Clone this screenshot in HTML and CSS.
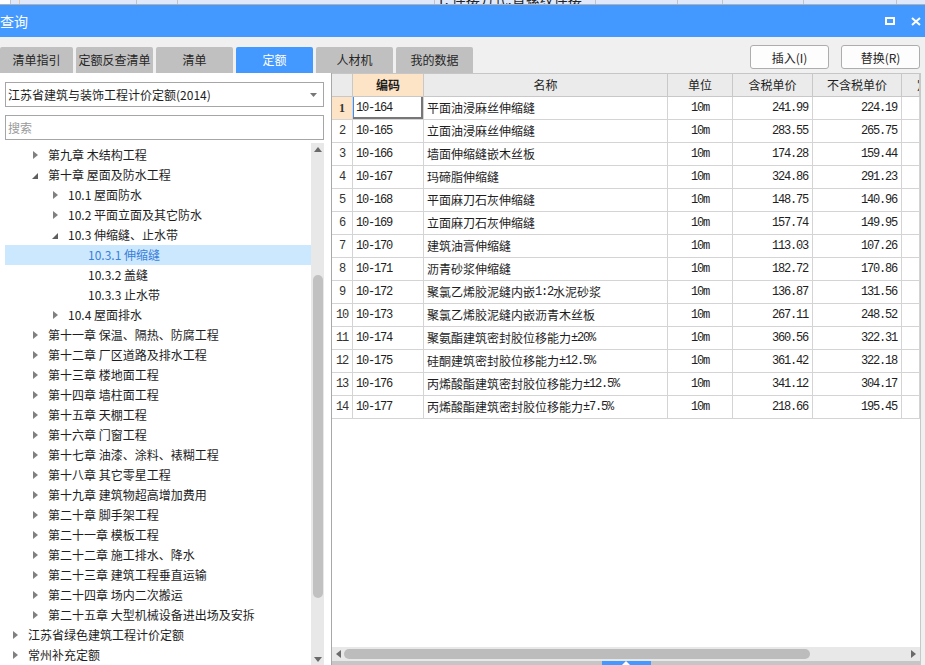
FILE: index.html
```html
<!DOCTYPE html>
<html lang="zh-CN">
<head>
<meta charset="utf-8">
<title>查询</title>
<link rel="stylesheet" href="styles.css">
</head>
<body>
<div class="bg-strip">
  <div class="bs bs-white"></div>
  <div class="bs"></div>
  <div class="bs bs-peach"></div>
  <div class="bs"></div>
  <div class="bs"></div>
  <div class="bs bs-text"><span>1. 连接方式:直螺纹连接</span></div>
  <div class="bs"></div>
  <div class="bs"></div>
  <div class="bs"></div>
  <div class="bs"></div>
  <div class="bs"></div>
</div>

<div class="titlebar">
  <span class="title">查询</span>
  <div class="win-icons">
    <svg class="ico-max" width="10" height="8" viewBox="0 0 10 8"><rect x="1" y="1" width="8" height="6" fill="none" stroke="#fff" stroke-width="2"/></svg>
    <svg class="ico-close" width="10" height="9" viewBox="0 0 10 9"><path d="M1 1 L9 8 M9 1 L1 8" stroke="#fff" stroke-width="2" fill="none"/></svg>
  </div>
</div>

<div class="toolbar">
  <div class="tabs">
    <div class="tab tab-first">清单指引</div>
    <div class="tab">定额反查清单</div>
    <div class="tab">清单</div>
    <div class="tab active">定额</div>
    <div class="tab">人材机</div>
    <div class="tab">我的数据</div>
  </div>
  <div class="actions">
    <button class="btn">插入(I)</button>
    <button class="btn">替换(R)</button>
  </div>
</div>

<div class="main">
  <div class="left">
    <div class="select">
      <span>江苏省建筑与装饰工程计价定额(2014)</span>
      <svg width="7" height="4" viewBox="0 0 7 4"><path d="M0 0 L7 0 L3.5 4Z" fill="#777"/></svg>
    </div>
    <div class="search">搜索</div>
    <div class="tree">
      <div class="rows">
        <div class="row l1"><span class="tw c"><svg width="5" height="8" viewBox="0 0 5 8"><path d="M0 0 L5 4 L0 8Z"/></svg></span>第九章 木结构工程</div>
        <div class="row l1"><span class="tw e"><svg width="6" height="6" viewBox="0 0 6 6"><path d="M6 0 L6 6 L0 6Z"/></svg></span>第十章 屋面及防水工程</div>
        <div class="row l2"><span class="tw c"><svg width="5" height="8" viewBox="0 0 5 8"><path d="M0 0 L5 4 L0 8Z"/></svg></span>10.1 屋面防水</div>
        <div class="row l2"><span class="tw c"><svg width="5" height="8" viewBox="0 0 5 8"><path d="M0 0 L5 4 L0 8Z"/></svg></span>10.2 平面立面及其它防水</div>
        <div class="row l2"><span class="tw e"><svg width="6" height="6" viewBox="0 0 6 6"><path d="M6 0 L6 6 L0 6Z"/></svg></span>10.3 伸缩缝、止水带</div>
        <div class="row l3 sel"><span class="tw"></span>10.3.1 伸缩缝</div>
        <div class="row l3"><span class="tw"></span>10.3.2 盖缝</div>
        <div class="row l3"><span class="tw"></span>10.3.3 止水带</div>
        <div class="row l2"><span class="tw c"><svg width="5" height="8" viewBox="0 0 5 8"><path d="M0 0 L5 4 L0 8Z"/></svg></span>10.4 屋面排水</div>
        <div class="row l1"><span class="tw c"><svg width="5" height="8" viewBox="0 0 5 8"><path d="M0 0 L5 4 L0 8Z"/></svg></span>第十一章 保温、隔热、防腐工程</div>
        <div class="row l1"><span class="tw c"><svg width="5" height="8" viewBox="0 0 5 8"><path d="M0 0 L5 4 L0 8Z"/></svg></span>第十二章 厂区道路及排水工程</div>
        <div class="row l1"><span class="tw c"><svg width="5" height="8" viewBox="0 0 5 8"><path d="M0 0 L5 4 L0 8Z"/></svg></span>第十三章 楼地面工程</div>
        <div class="row l1"><span class="tw c"><svg width="5" height="8" viewBox="0 0 5 8"><path d="M0 0 L5 4 L0 8Z"/></svg></span>第十四章 墙柱面工程</div>
        <div class="row l1"><span class="tw c"><svg width="5" height="8" viewBox="0 0 5 8"><path d="M0 0 L5 4 L0 8Z"/></svg></span>第十五章 天棚工程</div>
        <div class="row l1"><span class="tw c"><svg width="5" height="8" viewBox="0 0 5 8"><path d="M0 0 L5 4 L0 8Z"/></svg></span>第十六章 门窗工程</div>
        <div class="row l1"><span class="tw c"><svg width="5" height="8" viewBox="0 0 5 8"><path d="M0 0 L5 4 L0 8Z"/></svg></span>第十七章 油漆、涂料、裱糊工程</div>
        <div class="row l1"><span class="tw c"><svg width="5" height="8" viewBox="0 0 5 8"><path d="M0 0 L5 4 L0 8Z"/></svg></span>第十八章 其它零星工程</div>
        <div class="row l1"><span class="tw c"><svg width="5" height="8" viewBox="0 0 5 8"><path d="M0 0 L5 4 L0 8Z"/></svg></span>第十九章 建筑物超高增加费用</div>
        <div class="row l1"><span class="tw c"><svg width="5" height="8" viewBox="0 0 5 8"><path d="M0 0 L5 4 L0 8Z"/></svg></span>第二十章 脚手架工程</div>
        <div class="row l1"><span class="tw c"><svg width="5" height="8" viewBox="0 0 5 8"><path d="M0 0 L5 4 L0 8Z"/></svg></span>第二十一章 模板工程</div>
        <div class="row l1"><span class="tw c"><svg width="5" height="8" viewBox="0 0 5 8"><path d="M0 0 L5 4 L0 8Z"/></svg></span>第二十二章 施工排水、降水</div>
        <div class="row l1"><span class="tw c"><svg width="5" height="8" viewBox="0 0 5 8"><path d="M0 0 L5 4 L0 8Z"/></svg></span>第二十三章 建筑工程垂直运输</div>
        <div class="row l1"><span class="tw c"><svg width="5" height="8" viewBox="0 0 5 8"><path d="M0 0 L5 4 L0 8Z"/></svg></span>第二十四章 场内二次搬运</div>
        <div class="row l1"><span class="tw c"><svg width="5" height="8" viewBox="0 0 5 8"><path d="M0 0 L5 4 L0 8Z"/></svg></span>第二十五章 大型机械设备进出场及安拆</div>
        <div class="row l0"><span class="tw c"><svg width="5" height="8" viewBox="0 0 5 8"><path d="M0 0 L5 4 L0 8Z"/></svg></span>江苏省绿色建筑工程计价定额</div>
        <div class="row l0"><span class="tw c"><svg width="5" height="8" viewBox="0 0 5 8"><path d="M0 0 L5 4 L0 8Z"/></svg></span>常州补充定额</div>
      </div>
      <div class="vscroll">
        <div class="vs-arrow"><svg width="8" height="5" viewBox="0 0 8 5"><path d="M0 5 L4 0 L8 5Z" fill="#6a6a6a"/></svg></div>
        <div class="vs-thumb"></div>
        <div class="vs-fill"></div>
        <div class="vs-arrow"><svg width="8" height="5" viewBox="0 0 8 5"><path d="M0 0 L8 0 L4 5Z" fill="#6a6a6a"/></svg></div>
      </div>
    </div>
  </div>

  <div class="right">
    <div class="grid-area">
      <div class="grid">
        <div class="h rn"></div>
        <div class="h hcode">编码</div>
        <div class="h">名称</div>
        <div class="h">单位</div>
        <div class="h">含税单价</div>
        <div class="h">不含税单价</div>
        <div class="h hx">定额</div>

        <div class="rn cur">1</div><div class="code focus">10-164</div><div class="name">平面油浸麻丝伸缩缝</div><div class="unit">10m</div><div class="num">241.99</div><div class="num">224.19</div><div class="x"></div>
        <div class="rn">2</div><div class="code">10-165</div><div class="name">立面油浸麻丝伸缩缝</div><div class="unit">10m</div><div class="num">283.55</div><div class="num">265.75</div><div class="x"></div>
        <div class="rn">3</div><div class="code">10-166</div><div class="name">墙面伸缩缝嵌木丝板</div><div class="unit">10m</div><div class="num">174.28</div><div class="num">159.44</div><div class="x"></div>
        <div class="rn">4</div><div class="code">10-167</div><div class="name">玛碲脂伸缩缝</div><div class="unit">10m</div><div class="num">324.86</div><div class="num">291.23</div><div class="x"></div>
        <div class="rn">5</div><div class="code">10-168</div><div class="name">平面麻刀石灰伸缩缝</div><div class="unit">10m</div><div class="num">148.75</div><div class="num">140.96</div><div class="x"></div>
        <div class="rn">6</div><div class="code">10-169</div><div class="name">立面麻刀石灰伸缩缝</div><div class="unit">10m</div><div class="num">157.74</div><div class="num">149.95</div><div class="x"></div>
        <div class="rn">7</div><div class="code">10-170</div><div class="name">建筑油膏伸缩缝</div><div class="unit">10m</div><div class="num">113.03</div><div class="num">107.26</div><div class="x"></div>
        <div class="rn">8</div><div class="code">10-171</div><div class="name">沥青砂浆伸缩缝</div><div class="unit">10m</div><div class="num">182.72</div><div class="num">170.86</div><div class="x"></div>
        <div class="rn">9</div><div class="code">10-172</div><div class="name">聚氯乙烯胶泥缝内嵌<span class="half">1:2</span>水泥砂浆</div><div class="unit">10m</div><div class="num">136.87</div><div class="num">131.56</div><div class="x"></div>
        <div class="rn">10</div><div class="code">10-173</div><div class="name">聚氯乙烯胶泥缝内嵌沥青木丝板</div><div class="unit">10m</div><div class="num">267.11</div><div class="num">248.52</div><div class="x"></div>
        <div class="rn">11</div><div class="code">10-174</div><div class="name">聚氨酯建筑密封胶位移能力<span class="half">±20%</span></div><div class="unit">10m</div><div class="num">360.56</div><div class="num">322.31</div><div class="x"></div>
        <div class="rn">12</div><div class="code">10-175</div><div class="name">硅酮建筑密封胶位移能力<span class="half">±12.5%</span></div><div class="unit">10m</div><div class="num">361.42</div><div class="num">322.18</div><div class="x"></div>
        <div class="rn">13</div><div class="code">10-176</div><div class="name">丙烯酸酯建筑密封胶位移能力<span class="half">±12.5%</span></div><div class="unit">10m</div><div class="num">341.12</div><div class="num">304.17</div><div class="x"></div>
        <div class="rn">14</div><div class="code">10-177</div><div class="name">丙烯酸酯建筑密封胶位移能力<span class="half">±7.5%</span></div><div class="unit">10m</div><div class="num">218.66</div><div class="num">195.45</div><div class="x"></div>
      </div>
      <div class="hscroll">
        <svg width="5" height="8" viewBox="0 0 5 8"><path d="M5 0 L0 4 L5 8Z" fill="#6a6a6a"/></svg>
        <div class="hs-thumb"></div>
        <div class="hs-fill"></div>
        <svg width="5" height="8" viewBox="0 0 5 8"><path d="M0 0 L5 4 L0 8Z" fill="#6a6a6a"/></svg>
      </div>
      <div class="bottom-strip">
        <div class="pull-tab"><svg width="8" height="4" viewBox="0 0 8 4"><path d="M0 4 L4 0 L8 4Z" fill="#fff"/></svg></div>
      </div>
    </div>
    <div class="edge"></div>
  </div>
</div>
</body>
</html>
```
FILE: styles.css
```css
* { box-sizing: border-box; margin: 0; padding: 0; }
html, body { width: 925px; height: 665px; overflow: hidden; }
body {
  background: #f0f0f0;
  font-family: "Noto Sans CJK SC", "Microsoft YaHei", sans-serif;
  font-size: 12px;
  color: #1e1e1e;
  display: flex;
  flex-direction: column;
}

/* background window strip */
.bg-strip {
  height: 5px;
  flex: none;
  display: grid;
  grid-template-columns: 10px 9px 117px 41px 257px 161px 82px 45px 81px 93px 1fr;
  background: #dfe9fb;
  border-bottom: 1px solid #b0b0b0;
  overflow: hidden;
}
.bs { border-left: 1px solid #c4c4c4; display: flex; align-items: flex-end; overflow: hidden; }
.bs-white { background: #fff; border-left: none; }
.bs-peach { border-left-color: #e8c9a0; }
.bs-text span { font-size: 14px; line-height: 10px; padding-left: 2px; white-space: nowrap; color: #222; }

/* title bar */
.titlebar {
  height: 32px;
  flex: none;
  background: #4399ff;
  display: flex;
  align-items: center;
  justify-content: space-between;
  color: #fff;
}
.title { font-size: 14px; line-height: 16px; }
.win-icons { display: flex; align-items: center; gap: 16px; padding-right: 4px; }
.win-icons svg { display: block; }

/* toolbar */
.toolbar {
  height: 36px;
  flex: none;
  display: flex;
  justify-content: space-between;
}
.tabs { display: flex; gap: 3px; align-self: flex-end; }
.tab {
  width: 77px;
  height: 26px;
  line-height: 26px;
  text-align: center;
  background: #c0c0c0;
  border-radius: 2px 2px 0 0;
  color: #262626;
  white-space: nowrap;
}
.tab-first { width: 73px; }
.tab.active { background: #4399ff; color: #fff; }
.actions { display: flex; gap: 12px; padding: 8px 5px 0 0; align-items: flex-start; }
.btn {
  width: 79px;
  height: 24px;
  border: 1px solid #adadad;
  border-radius: 3px;
  background: #fdfdfd;
  font-family: inherit;
  font-size: 12px;
  color: #262626;
}

/* main area */
.main { flex: 1; display: flex; min-height: 0; }

.left {
  width: 331px;
  flex: none;
  background: #fff;
  display: flex;
  flex-direction: column;
  padding: 9px 7px 0 5px;
}
.select {
  height: 25px;
  border: 1px solid #a6a6a6;
  display: flex;
  align-items: center;
  justify-content: space-between;
  padding: 0 6px 0 2px;
  color: #1e1e1e;
}
.select svg { display: block; }
.search {
  margin-top: 8px;
  height: 25px;
  border: 1px solid #a6a6a6;
  line-height: 23px;
  padding-left: 2px;
  color: #9a9a9a;
}
.tree { margin-top: 3px; flex: 1; display: flex; min-height: 0; }
.rows { flex: 1; padding-top: 2px; overflow: hidden; }
.row {
  height: 20px;
  line-height: 20px;
  display: flex;
  align-items: center;
  white-space: nowrap;
  color: #1e1e1e;
}
.row.sel { background: #cce8ff; color: #3a7fd8; }
.l0 { padding-left: 8px; }
.l1 { padding-left: 28px; }
.l2 { padding-left: 48px; }
.l3 { padding-left: 68px; }
.tw { width: 15px; flex: none; display: flex; align-items: center; }
.tw svg { display: block; }
.tw.c svg { fill: #808080; }
.tw.e svg { fill: #5e5e5e; margin-left: -1px; margin-top: 2px; }

.vscroll {
  width: 13px;
  flex: none;
  background: #e8e8e8;
  display: flex;
  flex-direction: column;
  align-items: center;
}
.vs-arrow { height: 12px; display: flex; align-items: center; justify-content: center; flex: none; }
.vs-arrow svg { display: block; }
.vs-thumb {
  margin-top: 120px;
  width: 10px;
  height: 323px;
  border-radius: 5px;
  background: #c1c1c1;
  flex: none;
}
.vs-fill { flex: 1; }

/* right side */
.right {
  flex: 1;
  display: flex;
  border-left: 1px solid #a8a8a8;
  min-width: 0;
}
.grid-area {
  flex: 1;
  display: flex;
  flex-direction: column;
  background: #fff;
  min-width: 0;
}
.edge { width: 5px; flex: none; border-left: 1px solid #c8c8c8; background: #f0f0f0; }

.grid {
  flex: 1;
  display: grid;
  grid-template-columns: 21px 71px 244px 65px 80px 89px 1fr;
  grid-auto-rows: 23px;
  align-content: start;
  border-top: 1px solid #c6c6c6;
  overflow: hidden;
}
.grid > div {
  border-right: 1px solid #d4d4d4;
  border-bottom: 1px solid #d4d4d4;
  white-space: nowrap;
  overflow: hidden;
  display: flex;
  align-items: center;
  line-height: 16px;
}
.grid > .h {
  background: #ebebeb;
  justify-content: center;
  border-color: #c8c8c8;
  color: #1e1e1e;
}
.grid > .hcode { background: #fde4c6; font-weight: bold; }
.grid > .hx { justify-content: flex-start; padding-left: 15px; }
.grid > .rn, .grid > .code, .grid > .unit, .grid > .num, .half {
  font-family: "Liberation Mono", "DejaVu Sans Mono", monospace;
  font-size: 12px;
  letter-spacing: -1.2px;
  color: #1e1e1e;
}
.grid > .rn { justify-content: center; color: #333; background: #fff; }
.grid > .h.rn { background: #ebebeb; }
.grid > .rn.cur { background: #fde4c6; font-weight: bold; font-family: "Liberation Serif", serif; letter-spacing: 0; }
.grid > .code { padding-left: 3px; }
.grid > .code.focus { box-shadow: inset -2px -2px 0 #777, inset 1px 0 0 #3d8ef0; }
.grid > .name { padding-left: 3px; }
.grid > .unit { justify-content: center; }
.grid > .num { justify-content: flex-end; padding-right: 4px; }

.hscroll {
  height: 14px;
  flex: none;
  background: #e8e8e8;
  display: flex;
  align-items: center;
  padding: 0 4px 0 4px;
}
.hscroll svg { display: block; flex: none; }
.hs-thumb {
  margin-left: 3px;
  width: 466px;
  height: 10px;
  border-radius: 5px;
  background: #bcbcbc;
  flex: none;
}
.hs-fill { flex: 1; }
.bottom-strip {
  height: 4px;
  flex: none;
  background: #c6c6c6;
  display: flex;
  justify-content: center;
}
.pull-tab {
  width: 49px;
  height: 4px;
  background: #4399ff;
  display: flex;
  justify-content: center;
  align-items: flex-start;
}
.pull-tab svg { display: block; }
```
